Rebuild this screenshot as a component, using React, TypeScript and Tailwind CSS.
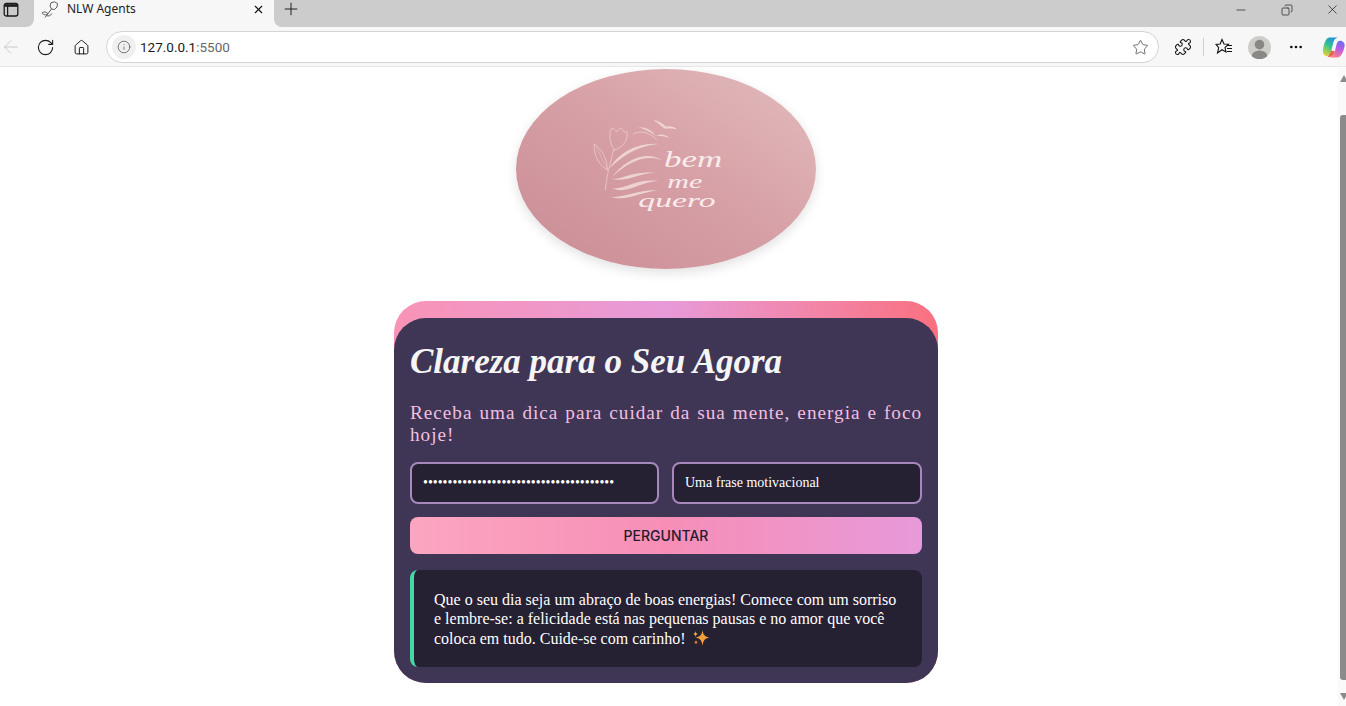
import {
  ArrowLeft,
  Copy,
  Home,
  Info,
  Minus,
  MoreHorizontal,
  Plus,
  Puzzle,
  RotateCw,
  Star,
  X,
} from "lucide-react";

const Sparkles = () => (
  <svg viewBox="0 0 18 16" className="ml-[3px] inline-block h-4 w-[18px] align-[-2px]">
    <path d="M10.5 0 C11.2 5 13 6.8 18 7.6 C13 8.4 11.2 10.2 10.5 16 C9.8 10.2 8 8.4 3 7.6 C8 6.8 9.8 5 10.5 0Z" fill="#f59d3d" />
    <path d="M3.5 1 C3.8 3 4.4 3.6 6.2 4 C4.4 4.4 3.8 5 3.5 7 C3.2 5 2.6 4.4 0.8 4 C2.6 3.6 3.2 3 3.5 1Z" fill="#f3a93f" />
    <path d="M4 10 C4.2 11.3 4.8 11.9 6.2 12.2 C4.8 12.5 4.2 13.1 4 15 C3.8 13.1 3.2 12.5 1.8 12.2 C3.2 11.9 3.8 11.3 4 10Z" fill="#ef8a30" />
  </svg>
);

const Copilot = () => (
  <svg viewBox="0 0 24 24" className="h-[23px] w-[23px]">
    <defs>
      <linearGradient id="copA" x1="0.7" y1="0" x2="0.2" y2="1">
        <stop offset="0" stopColor="#1a8fe3" />
        <stop offset="0.5" stopColor="#3cc48d" />
        <stop offset="1" stopColor="#e9d62f" />
      </linearGradient>
      <linearGradient id="copB" x1="0.6" y1="0" x2="0.4" y2="1">
        <stop offset="0" stopColor="#6a6cf0" />
        <stop offset="0.5" stopColor="#c05be0" />
        <stop offset="1" stopColor="#f6808c" />
      </linearGradient>
    </defs>
    <path d="M8 1.5 H17 C13.5 2 12.5 4 11.5 8 L9.5 16 C8.8 19.5 7.5 21.5 4.5 21 C1.5 20 0.5 17.5 1 14 C2 8 4 1.5 8 1.5Z" fill="url(#copA)" />
    <path d="M16 22.5 H8 C11 22 12.5 20 13.5 16 L15 9.5 C15.7 6 17.5 4.5 20 5 C23 6 24 8 23.5 11 C22.5 16 20 22.5 16 22.5Z" fill="url(#copB)" />
    <path d="M6 21.8 C9.5 22.8 12.5 20.5 13.5 16 L9.5 15 C8.5 18 7.5 20 6 21.8Z" fill="#f0604c" />
  </svg>
);

// tab bar + address bar of the browser around the page
const BrowserChrome = () => (
  <header className="flex h-[67px] shrink-0 flex-col border-b border-[#e8e8e8] bg-[#f7f7f7]">
    <div className="flex h-[27px] items-stretch">
      <div className="flex w-[34px] items-start rounded-br-lg bg-[#cccccc] pl-[3px] pt-[2px]">
        <svg viewBox="0 0 16 16" className="h-4 w-4" fill="none" stroke="#1a1a1a" strokeWidth="1.3">
          <rect x="1.2" y="1.5" width="13.6" height="12.5" rx="2" />
          <path d="M1.5 3.5 H14.5" strokeWidth="2.6" />
          <path d="M4.6 4 V14" />
        </svg>
      </div>
      <div className="flex w-[240px] items-start pl-[7px] pr-[9px] pt-[1px]">
        <svg viewBox="0 0 18 18" className="h-[18px] w-[18px]" fill="none" stroke="#5c5c5c" strokeWidth="1">
          <path d="M10 1.8 L13.5 0.8 L16.5 2.5 L16 6 L13.5 8.5 L10.5 8 L9 5 Z" />
          <path d="M10.5 8 L4 16.5 M6.8 12.5 C5 10.5 2.5 10.5 1 12 C2.5 14 5 14.5 6.8 12.5Z M5.5 14.5 C7 15.5 9.5 15 11 12.5" />
        </svg>
        <span className="ml-[8px] flex-1 font-['Noto_Sans',sans-serif] text-[12px] leading-[16px] text-[#222222]">NLW Agents</span>
        <X size={13} strokeWidth={2} className="mt-[2px] text-[#111111]" />
      </div>
      <div className="flex flex-1 items-start rounded-bl-lg bg-[#cccccc] pl-[7px] pr-[6px]">
        <Plus size={20} strokeWidth={1.1} className="-mt-[1px] text-[#111111]" />
        <div className="ml-auto flex items-center gap-[32px] pt-[2px]">
          <Minus size={14} strokeWidth={1.1} className="-translate-x-px text-[#111111]" />
          <Copy size={12} strokeWidth={1.3} className="-scale-x-100 text-[#111111]" />
          <X size={15} strokeWidth={1.1} className="text-[#111111]" />
        </div>
      </div>
    </div>
    <div className="flex flex-1 items-center pt-[1px]">
      <ArrowLeft size={22} strokeWidth={1} className="text-[#c4c4c4]" />
      <RotateCw size={19} strokeWidth={1.4} className="ml-[14px] text-[#1c1c1c]" />
      <Home size={17} strokeWidth={1.4} className="ml-[18px] text-[#1c1c1c]" />
      <div className="ml-[16px] flex h-[32px] w-[1053px] items-center rounded-full border border-[#d4d4d4] bg-white pl-[5px] pr-[9px]">
        <div className="flex h-[24px] w-[24px] items-center justify-center rounded-full bg-[#f0f0f0]">
          <Info size={14} strokeWidth={1.3} className="text-[#555555]" />
        </div>
        <span className="ml-[4px] font-['Roboto',sans-serif] text-[13.5px] text-[#1a1a1a]">
          127.0.0.1<span className="text-[#666666]">:5500</span>
        </span>
        <Star size={17} strokeWidth={1.1} className="ml-auto text-[#444444]" />
      </div>
      <Puzzle size={18} strokeWidth={1.4} className="ml-[15px] text-[#111111]" />
      <div className="ml-[11px] h-[18px] w-px bg-[#cfcfcf]" />
      <svg viewBox="0 0 18 18" className="ml-[11px] h-[18px] w-[18px]" fill="none" stroke="#111111" strokeWidth="1.1">
        <path d="M7 1.5 L9 6 L13.5 6.3 L10 9.5 L11 14 L7 11.7 L2.5 15 L3.7 9.6 L1 6.4 L5.2 6 Z" />
        <path d="M12 7.5 H17 M12 10.5 H17 M12 13.5 H17" />
      </svg>
      <div className="ml-[15px] flex h-[23px] w-[23px] items-center justify-center overflow-hidden rounded-full bg-[#cfcdca]">
        <svg viewBox="0 0 24 24" className="h-[23px] w-[23px]" fill="#8a8784">
          <circle cx="12" cy="9" r="5" />
          <ellipse cx="12" cy="21" rx="8" ry="6" />
        </svg>
      </div>
      <MoreHorizontal size={16} strokeWidth={2} className="ml-[17px] text-[#111111]" />
      <div className="ml-[18px] shrink-0">
        <Copilot />
      </div>
    </div>
  </header>
);

// logo drawn in the reference's zoomed coordinates (3x)
const Logo = () => (
  <div className="h-[200px] w-[300px] shrink-0 rounded-[50%] bg-gradient-to-bl from-[#e2bcbe] via-[#d69fa5] to-[#ca8c94] shadow-[0_4px_12px_rgba(0,0,0,0.12)]">
    <svg viewBox="0 0 540 390" className="ml-[54px] mt-[31px] h-[130px] w-[180px]">
      <g fill="none" stroke="#f1d9da" strokeWidth="2.4" strokeLinecap="round" opacity="0.8">
        <path d="M133 150 C118 130 116 100 124 86 C132 84 136 90 140 96 C146 82 158 82 162 96 C168 94 172 94 172 100 C172 125 155 145 133 150Z" />
        <path d="M130 150 C125 180 112 210 106 270" />
        <path d="M112 210 C112 170 92 145 72 132 C72 165 85 195 112 210Z" />
        <path d="M78 140 C90 165 100 185 110 205" strokeWidth="1.5" />
        <path d="M190 102 C215 88 240 100 260 118" />
      </g>
      <g fill="#f4e0e0" opacity="0.8">
        <path d="M118 205 C150 155 200 128 265 132 C205 138 165 162 118 205Z" />
        <path d="M125 232 C165 180 225 150 275 180 C225 162 175 185 125 232Z" />
        <path d="M118 235 C150 245 170 215 255 218 C195 222 165 250 118 235Z" />
        <path d="M125 265 C165 270 195 235 265 243 C205 245 175 285 125 265Z" />
        <path d="M122 290 C160 295 195 270 265 270 C210 278 165 305 122 290Z" />
        <path d="M205 82 C225 80 245 90 258 108 C240 95 225 88 205 82Z" />
        <path d="M250 60 C265 62 280 72 288 80 C300 76 312 80 322 88 C305 84 292 86 285 86 C272 78 262 68 250 60Z" />
        <path d="M258 108 C272 100 285 102 300 116 C285 108 272 108 258 108Z" />
      </g>
      <g fill="#f8ecec" fontFamily="'Liberation Serif', serif" fontStyle="italic">
        <text x="282" y="200" fontSize="68" textLength="175" lengthAdjust="spacingAndGlyphs">bem</text>
        <text x="292" y="264" fontSize="58" textLength="105" lengthAdjust="spacingAndGlyphs">me</text>
        <text x="205" y="322" fontSize="58" textLength="232" lengthAdjust="spacingAndGlyphs">quero</text>
      </g>
    </svg>
  </div>
);

const Scrollbar = () => (
  <div className="flex w-[14px] shrink-0 justify-end">
    <div className="flex w-[8px] flex-col items-end overflow-hidden bg-[#fafafa]">
      <svg viewBox="0 0 8 7" className="mt-[8px] h-[7px] w-[8px] shrink-0 translate-x-[2px]" fill="#8b8b8b">
        <path d="M4 0 L8 7 H0 Z" />
      </svg>
      <div className="mt-[33px] h-[565px] w-[6px] shrink-0 rounded-l-[3px] bg-[#8b8b8b]" />
      <svg viewBox="0 0 8 7" className="mt-auto mb-[6px] h-[7px] w-[8px] shrink-0 translate-x-[2px]" fill="#8b8b8b">
        <path d="M0 0 H8 L4 7 Z" />
      </svg>
    </div>
  </div>
);

const fieldClass =
  "h-[42px] min-w-0 rounded-lg border-2 border-[#a688bd] bg-[#262033] px-[11px] font-['Liberation_Serif',serif] text-[14px] text-white outline-none";

export default function App() {
  return (
    <div className="flex h-[706px] w-[1346px] flex-col overflow-hidden bg-white">
      <BrowserChrome />
      <div className="flex min-h-0 flex-1">
        <main className="flex flex-1 flex-col items-center pt-[2px]">
          <Logo />
          <section className="mt-[32px] w-[544px] rounded-[32px] bg-gradient-to-r from-[#f993b6] via-[#e79ad8] to-[#f9707f] pt-[17px]">
            <div className="rounded-[32px] bg-[#3f3555] px-4 pb-4 pt-[14px]">
              <h1 className="h-[60px] font-['Liberation_Serif',serif] text-[35px] font-semibold italic leading-[60px] text-[#f5f5f5]">
                Clareza para o Seu Agora
              </h1>
              <p className="mt-[10px] text-justify font-['Liberation_Serif',serif] text-[19.2px] leading-[22px] tracking-[1px] text-[#f2bfe0]">
                Receba uma dica para cuidar da sua mente, energia e foco hoje!
              </p>
              <form className="mt-[16px] flex flex-col gap-[13px]">
                <div className="flex gap-[13px]">
                  <input type="password" readOnly value={"x".repeat(39)} className={`${fieldClass} w-[249px]`} />
                  <input type="text" readOnly value="Uma frase motivacional" className={`${fieldClass} w-[250px]`} />
                </div>
                <button
                  type="button"
                  className="h-[37px] rounded-lg bg-gradient-to-r from-[#fba6c1] via-[#f78eb6] to-[#e799d9] font-['Inter',sans-serif] text-[14px] font-medium text-[#231c2e]"
                >
                  PERGUNTAR
                </button>
              </form>
              <div className="mt-[16px] h-[97px] rounded-lg border-l-4 border-[#44d9a4] bg-[#262033] py-[20px] pl-5 pr-5 font-['Liberation_Serif',serif] text-[16px] leading-[19.25px] text-white">
                Que o seu dia seja um abraço de boas energias! Comece com um sorriso e lembre-se: a felicidade está nas pequenas pausas e no amor que você coloca em tudo. Cuide-se com carinho! <Sparkles />
              </div>
            </div>
          </section>
        </main>
        <Scrollbar />
      </div>
    </div>
  );
}
